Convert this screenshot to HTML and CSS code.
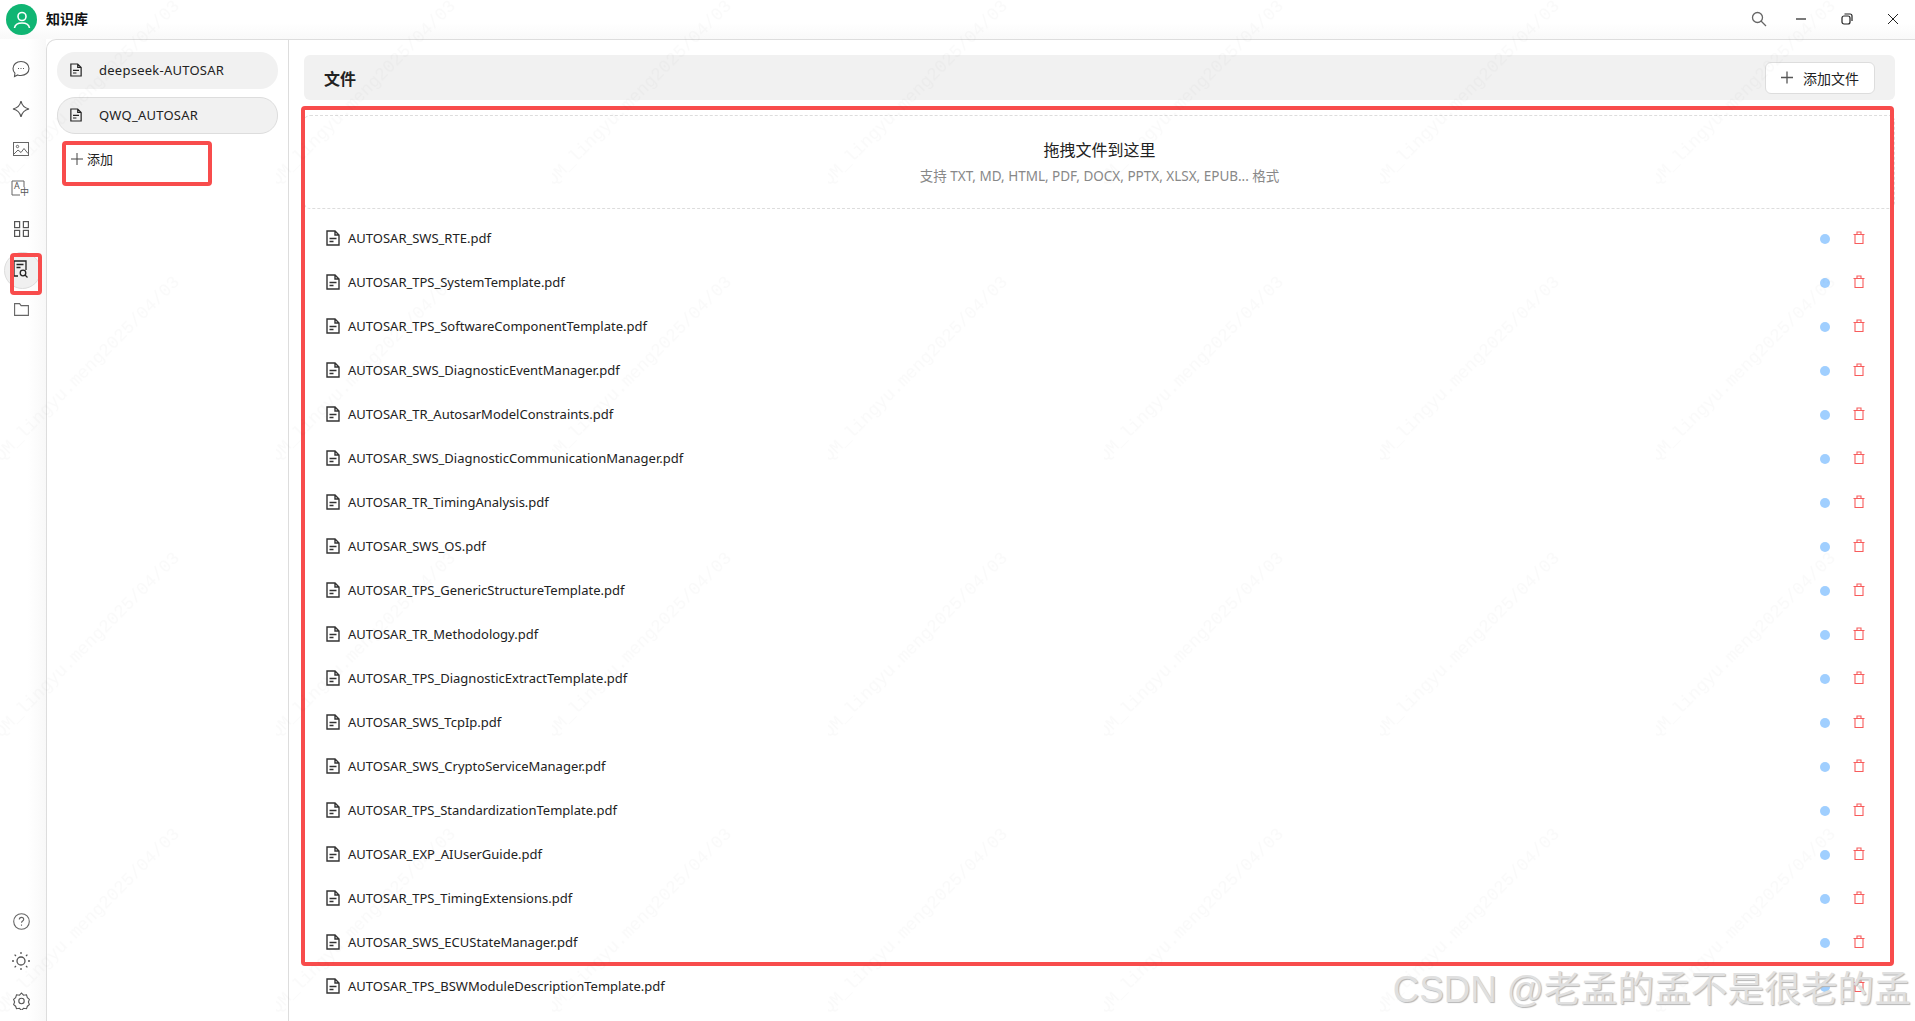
FILE: index.html
```html
<!DOCTYPE html>
<html lang="zh">
<head>
    <meta charset="UTF-8">
    <title>知识库</title>
    <link rel="stylesheet" href="styles.css">
</head>
<body>
    <svg class="icon-defs" width="0" height="0">
        <symbol id="file" viewBox="0 0 14 16">
            <path d="M1 1h8l4 4v10H1z M9 1v4h4" fill="none" stroke="currentColor" stroke-width="1.4"/>
            <path d="M3.500 8.500h7M3.500 11.500h4" stroke="currentColor" stroke-width="1.4"/>
        </symbol>
        <symbol id="trash" viewBox="0 0 12 13">
            <path d="M2 3.500h8v9H2z M.5 3.500h11M4 3.500V1h4v2.500" fill="none" stroke="currentColor" stroke-width="1.1"/>
        </symbol>
    </svg>

    <header class="titlebar">
        <div class="titlebar-left">
            <div class="avatar">
                <svg width="20" height="20" viewBox="0 0 20 20" fill="none" stroke="#fff" stroke-width="1.6">
                    <circle cx="10" cy="6.500" r="4"/>
                    <path d="M2.500 18c.5-3.500 3.500-5 7.500-5s7 1.500 7.500 5"/>
                </svg>
            </div>
            <span class="app-title">知识库</span>
        </div>
        <div class="window-controls">
            <svg class="search-icon" width="16" height="16" viewBox="0 0 16 16" fill="none" stroke="#666" stroke-width="1.3"><circle cx="6.500" cy="6.500" r="5"/><path d="M10 10l5 5"/></svg>
            <svg width="12" height="12" viewBox="0 0 12 12" stroke="#222" stroke-width="1.2"><path d="M1 6h10"/></svg>
            <svg width="12" height="12" viewBox="0 0 12 12" fill="none" stroke="#222" stroke-width="1.2"><rect x="1" y="3" width="8" height="8" rx="2"/><path d="M3.500 1H9a2 2 0 0 1 2 2v5"/></svg>
            <svg width="12" height="12" viewBox="0 0 12 12" stroke="#222" stroke-width="1"><path d="M1 1l10 10M11 1L1 11"/></svg>
        </div>
    </header>

    <div class="app-body">
        <nav class="nav-rail">
            <div class="nav-group">
                <div class="nav-item">
                    <svg width="18" height="18" viewBox="0 0 18 18" fill="none" stroke="#555" stroke-width="1.1"><path d="M9 1.500c4.500 0 8 2.900 8 7s-3.500 7-8 7c-1.200 0-2.300-.2-3.300-.6L2.500 16.500l.4-3.300C1.700 12 1 10.400 1 8.500c0-4.100 3.500-7 8-7z"/><path d="M6 8.500h1M8.500 8.500h1M11 8.500h1"/></svg>
                </div>
                <div class="nav-item">
                    <svg width="18" height="18" viewBox="0 0 18 18" fill="none" stroke="#555" stroke-width="1.2"><path d="M9 1c.8 4 3.500 7 8 8-4.500 1-7.200 4-8 8-.8-4-3.500-7-8-8 4.500-1 7.200-4 8-8z"/></svg>
                </div>
                <div class="nav-item">
                    <svg width="16" height="14" viewBox="0 0 16 14" fill="none" stroke="#666" stroke-width="1"><rect x=".5" y=".5" width="15" height="13"/><circle cx="4.500" cy="4.500" r="1.200"/><path d="M1 12l4-4 3 2.500 3-4 4 5"/></svg>
                </div>
                <div class="nav-item">
                    <svg width="20" height="18" viewBox="0 0 20 18">
                        <path d="M9 15H1V1h12v6" fill="none" stroke="#666" stroke-width="1"/>
                        <text x="3" y="9" class="translate-a">A</text>
                        <text x="9" y="15" class="translate-zh">中</text>
                    </svg>
                </div>
                <div class="nav-item">
                    <svg width="15" height="16" viewBox="0 0 15 16" fill="none" stroke="#555" stroke-width="1.2"><rect x=".6" y=".6" width="5" height="6"/><rect x="9.400" y=".6" width="5" height="6"/><rect x=".6" y="9.400" width="5" height="6"/><rect x="9.400" y="9.400" width="5" height="6"/></svg>
                </div>
                <div class="nav-item nav-item-active">
                    <svg width="16" height="18" viewBox="0 0 16 18" fill="none" stroke="#222" stroke-width="1.3"><path d="M5 16H1V1h12v9"/><path d="M3.500 4.500h7M3.500 7.500h4"/><circle cx="10" cy="13" r="2.800"/><path d="M12 15l2.500 2.500"/></svg>
                </div>
                <div class="nav-item">
                    <svg width="15" height="13" viewBox="0 0 15 13" fill="none" stroke="#666" stroke-width="1.1"><path d="M.6.6h5l1.500 2h7.300v9.800H.6z"/></svg>
                </div>
            </div>
            <div class="nav-group">
                <div class="nav-item">
                    <svg width="17" height="17" viewBox="0 0 17 17" fill="none" stroke="#666" stroke-width="1.1"><circle cx="8.500" cy="8.500" r="7.800"/><path d="M6.300 6.500c0-1.300 1-2.100 2.200-2.100s2.200.8 2.200 2c0 1.600-2.200 1.700-2.200 3.400M8.500 11.500v1.300"/></svg>
                </div>
                <div class="nav-item">
                    <svg width="18" height="18" viewBox="0 0 18 18" fill="none" stroke="#555" stroke-width="1.3"><circle cx="9" cy="9" r="4"/><path d="M9 0v2M9 16v2M0 9h2M16 9h2M2.600 2.600L4 4M14 14l1.400 1.400M2.600 15.400L4 14M14 4l1.400-1.400" stroke-dasharray="2 1"/></svg>
                </div>
                <div class="nav-item">
                    <svg width="17" height="18" viewBox="0 0 17 18" fill="none" stroke="#555" stroke-width="1.1"><path d="M8.500 1l2 2.200 3-.4.900 3 2 1.600-1 2.600 1 2.600-2 1.600-.9 2.500-3-.4-2 2.200-2-2.200-3 .4-.9-2.500-2-1.600 1-2.600-1-2.600 2-1.600.9-3 3 .4z"/><circle cx="8.500" cy="9" r="2.700"/></svg>
                </div>
            </div>
        </nav>

        <aside class="kb-panel">
            <div class="kb-item">
                <svg class="kb-icon"><use href="#file"/></svg>
                <span>deepseek-AUTOSAR</span>
            </div>
            <div class="kb-item kb-item-active">
                <svg class="kb-icon"><use href="#file"/></svg>
                <span>QWQ_AUTOSAR</span>
            </div>
            <div class="kb-add">
                <svg width="12" height="12" viewBox="0 0 12 12" stroke="#444" stroke-width="1"><path d="M6 0v12M0 6h12"/></svg>
                <span>添加</span>
            </div>
        </aside>

        <main class="content">
            <div class="content-head">
                <h2 class="content-title">文件</h2>
                <button class="add-btn">
                    <svg width="13" height="13" viewBox="0 0 13 13" stroke="#555" stroke-width="1.4"><path d="M6.500 0v13M0 6.500h13"/></svg>
                    <span>添加文件</span>
                </button>
            </div>

            <div class="dropzone">
                <div class="dropzone-title">拖拽文件到这里</div>
                <div class="dropzone-sub">支持 TXT, MD, HTML, PDF, DOCX, PPTX, XLSX, EPUB... 格式</div>
            </div>

            <ul class="file-list">
                <li class="file-row"><svg class="file-icon"><use href="#file"/></svg><span class="file-name">AUTOSAR_SWS_RTE.pdf</span><i class="status-dot"></i><svg class="trash-icon"><use href="#trash"/></svg></li>
                <li class="file-row"><svg class="file-icon"><use href="#file"/></svg><span class="file-name">AUTOSAR_TPS_SystemTemplate.pdf</span><i class="status-dot"></i><svg class="trash-icon"><use href="#trash"/></svg></li>
                <li class="file-row"><svg class="file-icon"><use href="#file"/></svg><span class="file-name">AUTOSAR_TPS_SoftwareComponentTemplate.pdf</span><i class="status-dot"></i><svg class="trash-icon"><use href="#trash"/></svg></li>
                <li class="file-row"><svg class="file-icon"><use href="#file"/></svg><span class="file-name">AUTOSAR_SWS_DiagnosticEventManager.pdf</span><i class="status-dot"></i><svg class="trash-icon"><use href="#trash"/></svg></li>
                <li class="file-row"><svg class="file-icon"><use href="#file"/></svg><span class="file-name">AUTOSAR_TR_AutosarModelConstraints.pdf</span><i class="status-dot"></i><svg class="trash-icon"><use href="#trash"/></svg></li>
                <li class="file-row"><svg class="file-icon"><use href="#file"/></svg><span class="file-name">AUTOSAR_SWS_DiagnosticCommunicationManager.pdf</span><i class="status-dot"></i><svg class="trash-icon"><use href="#trash"/></svg></li>
                <li class="file-row"><svg class="file-icon"><use href="#file"/></svg><span class="file-name">AUTOSAR_TR_TimingAnalysis.pdf</span><i class="status-dot"></i><svg class="trash-icon"><use href="#trash"/></svg></li>
                <li class="file-row"><svg class="file-icon"><use href="#file"/></svg><span class="file-name">AUTOSAR_SWS_OS.pdf</span><i class="status-dot"></i><svg class="trash-icon"><use href="#trash"/></svg></li>
                <li class="file-row"><svg class="file-icon"><use href="#file"/></svg><span class="file-name">AUTOSAR_TPS_GenericStructureTemplate.pdf</span><i class="status-dot"></i><svg class="trash-icon"><use href="#trash"/></svg></li>
                <li class="file-row"><svg class="file-icon"><use href="#file"/></svg><span class="file-name">AUTOSAR_TR_Methodology.pdf</span><i class="status-dot"></i><svg class="trash-icon"><use href="#trash"/></svg></li>
                <li class="file-row"><svg class="file-icon"><use href="#file"/></svg><span class="file-name">AUTOSAR_TPS_DiagnosticExtractTemplate.pdf</span><i class="status-dot"></i><svg class="trash-icon"><use href="#trash"/></svg></li>
                <li class="file-row"><svg class="file-icon"><use href="#file"/></svg><span class="file-name">AUTOSAR_SWS_TcpIp.pdf</span><i class="status-dot"></i><svg class="trash-icon"><use href="#trash"/></svg></li>
                <li class="file-row"><svg class="file-icon"><use href="#file"/></svg><span class="file-name">AUTOSAR_SWS_CryptoServiceManager.pdf</span><i class="status-dot"></i><svg class="trash-icon"><use href="#trash"/></svg></li>
                <li class="file-row"><svg class="file-icon"><use href="#file"/></svg><span class="file-name">AUTOSAR_TPS_StandardizationTemplate.pdf</span><i class="status-dot"></i><svg class="trash-icon"><use href="#trash"/></svg></li>
                <li class="file-row"><svg class="file-icon"><use href="#file"/></svg><span class="file-name">AUTOSAR_EXP_AIUserGuide.pdf</span><i class="status-dot"></i><svg class="trash-icon"><use href="#trash"/></svg></li>
                <li class="file-row"><svg class="file-icon"><use href="#file"/></svg><span class="file-name">AUTOSAR_TPS_TimingExtensions.pdf</span><i class="status-dot"></i><svg class="trash-icon"><use href="#trash"/></svg></li>
                <li class="file-row"><svg class="file-icon"><use href="#file"/></svg><span class="file-name">AUTOSAR_SWS_ECUStateManager.pdf</span><i class="status-dot"></i><svg class="trash-icon"><use href="#trash"/></svg></li>
                <li class="file-row"><svg class="file-icon"><use href="#file"/></svg><span class="file-name">AUTOSAR_TPS_BSWModuleDescriptionTemplate.pdf</span><i class="status-dot"></i><svg class="trash-icon"><use href="#trash"/></svg></li>
            </ul>
        </main>
    </div>

    <!-- screenshot annotations -->
    <div class="mark mark-nav"></div>
    <div class="mark mark-add"></div>
    <div class="mark mark-files"></div>

    <svg class="watermark" width="1915" height="1021">
        <defs>
            <pattern id="wm" width="276" height="276" patternUnits="userSpaceOnUse">
                <text x="0" y="0" transform="translate(1 186) rotate(-45)" class="watermark-text">QM_lingyu.meng2025/04/03</text>
            </pattern>
        </defs>
        <rect width="1915" height="1021" fill="url(#wm)"/>
    </svg>

    <div class="csdn-mark">CSDN @老孟的孟不是很老的孟</div>
</body>
</html>
```
FILE: styles.css
```css
* {
    box-sizing: border-box;
}
html, body {
    margin: 0;
    height: 100%;
    overflow: hidden;
}
body {
    font-family: "Noto Sans", "Noto Sans CJK SC", sans-serif;
    color: #222;
    background: #fff;
    position: relative;
}
.icon-defs {
    position: absolute;
}

.titlebar {
    height: 39px;
    display: flex;
    justify-content: space-between;
    align-items: center;
    background: linear-gradient(#fff 60%, #f9f9f9);
}
.titlebar-left {
    display: flex;
    align-items: center;
    gap: 9px;
    padding-left: 6px;
}
.avatar {
    width: 31px;
    height: 31px;
    border-radius: 50%;
    background: #10b573;
    display: flex;
    align-items: center;
    justify-content: center;
}
.app-title {
    font-size: 14px;
    font-weight: 700;
    color: #111;
    margin-top: -4px;
}
.window-controls {
    display: flex;
    align-items: center;
    gap: 34px;
    padding-right: 16px;
    margin-top: -2px;
}
.search-icon {
    margin-right: -6px;
}

.app-body {
    display: flex;
    height: 982px;
}
.nav-rail {
    width: 46px;
    flex: none;
    display: flex;
    flex-direction: column;
    justify-content: space-between;
    padding: 10px 0 0;
    background: linear-gradient(90deg, #fff 60%, #f8f8f8);
}
.nav-group {
    display: flex;
    flex-direction: column;
}
.nav-item {
    width: 42px;
    height: 40px;
    display: flex;
    align-items: center;
    justify-content: center;
}
.nav-item-active {
    position: relative;
}
.nav-item-active::before {
    content: "";
    position: absolute;
    left: 4px;
    top: 3px;
    width: 35px;
    height: 35px;
    border-radius: 50%;
    background: #f0f0f0;
    border: 1px solid #ddd;
}
.nav-item-active svg {
    position: relative;
}
.translate-a {
    font-size: 9px;
    fill: #555;
}
.translate-zh {
    font-size: 9px;
    fill: #555;
}

.kb-panel {
    width: 243px;
    flex: none;
    padding: 12px 10px;
    border-top: 1px solid #ddd;
    border-left: 1px solid #ddd;
    border-right: 1px solid #ddd;
    border-top-left-radius: 10px;
}
.kb-item {
    height: 37px;
    margin-bottom: 8px;
    padding: 0 0 2px 13px;
    display: flex;
    align-items: center;
    gap: 17px;
    background: #f1f1f1;
    border-radius: 18px;
    font-size: 13px;
    letter-spacing: 0.25px;
    color: #222;
}
.kb-item-active {
    border: 1px solid #ddd;
    padding-left: 12px;
}
.kb-icon {
    width: 12px;
    height: 14px;
    color: #222;
}
.kb-add {
    display: flex;
    align-items: center;
    gap: 4px;
    padding: 7px 0 0 14px;
    font-size: 13px;
}

.content {
    flex: 1;
    min-width: 0;
    padding: 15px 20px 0 15px;
    border-top: 1px solid #ddd;
}
.content-head {
    height: 45px;
    display: flex;
    justify-content: space-between;
    align-items: center;
    padding: 0 20px;
    background: #f1f1f1;
    border-radius: 6px;
}
.content-title {
    margin: 0;
    font-size: 16px;
    font-weight: 700;
}
.add-btn {
    display: flex;
    align-items: center;
    gap: 10px;
    height: 32px;
    width: 110px;
    padding: 0 15px;
    white-space: nowrap;
    background: #fff;
    border: 1px solid #ddd;
    border-radius: 6px;
    font: inherit;
    font-size: 14px;
    color: #222;
}

.dropzone {
    height: 94px;
    margin-top: 15px;
    text-align: center;
    border: 1px dashed #ddd;
    border-radius: 6px;
    padding-top: 23px;
}
.dropzone-title {
    font-size: 16px;
    line-height: 22px;
}
.dropzone-sub {
    margin-top: 6px;
    font-size: 13.5px;
    line-height: 18px;
    color: #888;
}

.file-list {
    list-style: none;
    margin: 7px 0 0;
    padding: 0;
}
.file-row {
    height: 44px;
    display: flex;
    align-items: center;
    padding: 0 30px 0 22px;
    font-size: 13px;
}
.file-icon {
    width: 14px;
    height: 16px;
    flex: none;
    color: #333;
}
.file-name {
    margin-left: 8px;
    flex: 1;
}
.status-dot {
    width: 10px;
    height: 10px;
    border-radius: 50%;
    background: #a0cfff;
    margin-top: 1px;
}
.trash-icon {
    width: 12px;
    height: 13px;
    margin-left: 23px;
    margin-bottom: 1px;
    color: #f75c5c;
}

/* red boxes drawn over the screenshot */
.mark {
    position: absolute;
    border: 4px solid #f84c4c;
    border-radius: 4px;
    pointer-events: none;
}
.mark-nav {
    left: 10px;
    top: 253px;
    width: 32px;
    height: 42px;
}
.mark-add {
    left: 62px;
    top: 141px;
    width: 150px;
    height: 45px;
}
.mark-files {
    left: 301px;
    top: 106px;
    width: 1593px;
    height: 860px;
}

.watermark {
    position: absolute;
    left: 0;
    top: 0;
    pointer-events: none;
}
.watermark-text {
    font-family: "Liberation Mono", monospace;
    font-size: 17.6px;
    fill: #000;
    opacity: 0.02;
}

.csdn-mark {
    position: absolute;
    right: 4px;
    bottom: 9px;
    font-family: "Liberation Sans", "Noto Sans CJK SC", sans-serif;
    font-size: 36.7px;
    line-height: 44px;
    white-space: nowrap;
    color: #e0e0e0;
    text-shadow: 1px 1px 1px #b5b5b5;
}
```
